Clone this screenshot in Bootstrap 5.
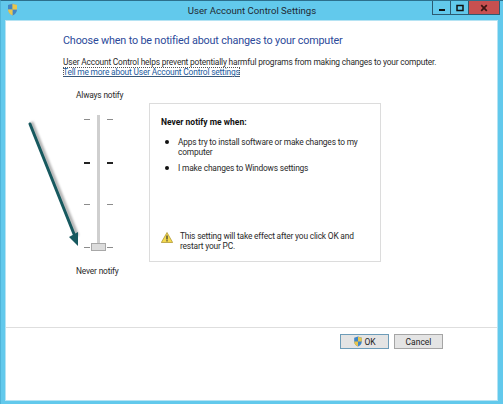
<!DOCTYPE html>
<html lang="en">
<head>
  <meta charset="UTF-8" />
  <meta name="viewport" content="width=device-width, initial-scale=1" />
  <title>User Account Control Settings</title>
  <link href="https://cdn.jsdelivr.net/npm/bootstrap@5.3.0/dist/css/bootstrap.min.css" rel="stylesheet" />
  <style>
    html, body { height: 404px; overflow: hidden; }
    body {
      background-color: #62c9ec;
      font-family: Roboto, "Noto Sans", "Liberation Sans", sans-serif;
      font-size: 8.4px;
      line-height: 10px;
      letter-spacing: -0.18px;
      color: #2a2a2a;
    }
    .win-frame { width: 503px; height: 404px; border-top: 1px solid #2c6f8c; border-left: 1px solid #4fb4d8; }
    .title-bar { height: 19px; }
    .title-text { font-size: 9.6px; letter-spacing: 0; color: #1f2a33; left: 0; right: 0; top: 4px; line-height: 12px; }
    .shield { margin: 2px 0 0 6px; }
    .win-btn { height: 14px; border: 1px solid #2c5a72; border-top: 0; background: #62c9ec; }
    .win-min { width: 19px; }
    .win-max { width: 18px; border-left: 0; }
    .win-close { width: 31px; border-left: 0; background: #c75050; margin-right: 3px; }
    .client {
      width: 493px; height: 381px; margin-left: 4px;
      background: #fff; border: 1px solid #b5e3f3;
    }
    .client-main { height: 306px; padding: 12px 0 0 57px; }
    .head-text { font-size: 10.8px; letter-spacing: -0.17px; line-height: 15px; color: #2c4a9a; margin-bottom: 9px; }
    .help-link { color: #1c5a9e; text-decoration: underline; outline: 1px dotted #555; outline-offset: -1px; width: max-content; display: block; }
    .slider-col { width: 73px; margin-left: 13px; }
    .slider-label { line-height: 10px; }
    .label-top { margin-top: 13px; }
    .slider-box { width: 47px; height: 142px; margin: 15px 0 9px 0; padding: 4px 0 0; position: relative; }
    .slider-track { position: absolute; left: 21px; top: 0; width: 3px; height: 130px; background: #cfcfcf; }
    .slider-thumb { position: absolute; left: 15px; top: 128px; width: 15px; height: 8px; background: #dcdcdc; border: 1px solid #a8a8a8; }
    .tick-row { height: 1.5px; margin-bottom: 41px; padding: 0 10px 0 8px; }
    .tick-mark { width: 6px; height: 1px; background: #8c8c8c; }
    .tick-mark.strong { background: #222; height: 2px; }
    .info-box {
      width: 232px; height: 159px; margin: 26px 0 0 0;
      border: 1px solid #dcdcdc; padding: 12.5px 12px 0 11px;
    }
    .info-title { font-weight: 700; font-size: 8.5px; letter-spacing: 0; color: #111; line-height: 11px; margin-bottom: 9.5px; }
    .info-list { padding-left: 17px; margin: 0; list-style: none; }
    .info-list li { position: relative; margin-bottom: 6px; }
    .info-list li::before { content: ""; position: absolute; left: -13px; top: 3px; width: 4px; height: 4px; border-radius: 50%; background: #111; }
    .warn-row { gap: 7px; margin-bottom: 10px; }
    .warn-icon { margin-top: 1px; }
    .arrow-over { position: absolute; left: 0; top: 0; pointer-events: none; }
    .foot-bar { border-top: 1px solid #dedede; height: 73px; padding: 6px 54px 0 0; gap: 5px; }
    .dlg-btn {
      width: 49px; height: 15px; padding: 0; font-size: 8.5px; letter-spacing: 0; line-height: 12px; color: #222;
      background: #e4e4e4; border: 1px solid #a5a5a5; border-radius: 0;
    }
    .dlg-btn.default-btn { border-color: #6d9cb8; gap: 1px; }
  </style>
</head>
<body class="m-0 position-relative">
  <div class="win-frame d-flex flex-column">
    <div class="title-bar d-flex justify-content-between align-items-start position-relative">
      <svg class="shield" width="11" height="13" viewBox="0 0 11 13">
        <path d="M5.5 0.5 L10 2 V6.5 C10 9.5 7.8 11.5 5.5 12.5 C3.2 11.5 1 9.5 1 6.5 V2 Z" fill="#8fa7a8"/>
        <path d="M5.5 1 V6.5 H1 V2 Z" fill="#3f86c6"/>
        <path d="M5.5 6.5 H10 C10 9 8 11.3 5.5 12.5 Z" fill="#3f86c6"/>
        <path d="M5.5 1 L10 2 V6.5 H5.5 Z" fill="#e8c64e"/>
        <path d="M5.5 6.5 V12.5 C3.2 11.5 1 9.5 1 6.5 Z" fill="#e8c64e"/>
      </svg>
      <div class="title-text position-absolute text-center">User Account Control Settings</div>
      <div class="d-flex">
        <div class="win-btn win-min d-flex align-items-center justify-content-center">
          <svg width="8" height="8" viewBox="0 0 8 8"><rect x="1" y="5" width="6" height="2" fill="#111"/></svg>
        </div>
        <div class="win-btn win-max d-flex align-items-center justify-content-center">
          <svg width="8" height="8" viewBox="0 0 8 8"><rect x="1" y="1.5" width="6" height="5" fill="none" stroke="#111" stroke-width="1.5"/></svg>
        </div>
        <div class="win-btn win-close d-flex align-items-center justify-content-center">
          <svg width="8" height="8" viewBox="0 0 8 8"><path d="M1.2 1.2 L6.8 6.8 M6.8 1.2 L1.2 6.8" stroke="#3a1512" stroke-width="1.7"/></svg>
        </div>
      </div>
    </div>

    <div class="client d-flex flex-column">
      <div class="client-main">
        <div class="head-text">Choose when to be notified about changes to your computer</div>
        <div>User Account Control helps prevent potentially harmful programs from making changes to your computer.</div>
        <a class="help-link" href="#">Tell me more about User Account Control settings</a>
        <div class="d-flex">
          <div class="slider-col">
            <div class="slider-label label-top">Always notify</div>
            <div class="slider-box">
              <div class="slider-track"></div>
              <div class="tick-row d-flex justify-content-between"><span class="tick-mark"></span><span class="tick-mark"></span></div>
              <div class="tick-row d-flex justify-content-between"><span class="tick-mark strong"></span><span class="tick-mark strong"></span></div>
              <div class="tick-row d-flex justify-content-between"><span class="tick-mark"></span><span class="tick-mark"></span></div>
              <div class="tick-row d-flex justify-content-between"><span class="tick-mark"></span><span class="tick-mark"></span></div>
              <div class="slider-thumb"></div>
            </div>
            <div class="slider-label">Never notify</div>
          </div>
          <div class="info-box d-flex flex-column justify-content-between">
            <div>
              <div class="info-title">Never notify me when:</div>
              <ul class="info-list">
                <li>Apps try to install software or make changes to my computer</li>
                <li>I make changes to Windows settings</li>
              </ul>
            </div>
            <div class="warn-row d-flex align-items-start">
              <svg class="warn-icon flex-shrink-0" width="12" height="11" viewBox="0 0 12 11">
                <path d="M6 0.5 L11.7 10.5 H0.3 Z" fill="#f3d94e" stroke="#a98f2a" stroke-width="0.7"/>
                <rect x="5.4" y="3.5" width="1.2" height="4" fill="#333"/>
                <rect x="5.4" y="8.2" width="1.2" height="1.2" fill="#333"/>
              </svg>
              <div>This setting will take effect after you click OK and restart your PC.</div>
            </div>
          </div>
        </div>
      </div>
      <div class="foot-bar d-flex justify-content-end align-items-start">
        <button class="dlg-btn default-btn d-flex align-items-center justify-content-center" type="button">
          <svg width="10" height="11" viewBox="0 0 11 13">
            <path d="M5.5 0.5 L10 2 V6.5 C10 9.5 7.8 11.5 5.5 12.5 C3.2 11.5 1 9.5 1 6.5 V2 Z" fill="#3f86c6"/>
            <path d="M5.5 1 L10 2 V6.5 H5.5 Z" fill="#e8c64e"/>
            <path d="M5.5 6.5 V12.5 C3.2 11.5 1 9.5 1 6.5 Z" fill="#e8c64e"/>
          </svg>
          OK
        </button>
        <button class="dlg-btn" type="button">Cancel</button>
      </div>
    </div>
  </div>

  <svg class="arrow-over" width="503" height="404" viewBox="0 0 503 404">
    <defs><filter id="arrow-blur" x="-30%" y="-10%" width="160%" height="120%"><feGaussianBlur stdDeviation="1.2"/></filter></defs>
    <line x1="30" y1="122" x2="76" y2="236" stroke="#000" stroke-opacity=".3" stroke-width="3.5" filter="url(#arrow-blur)" transform="translate(1.5 0)"/>
    <line x1="30" y1="124" x2="74" y2="234" stroke="#17595f" stroke-width="3" stroke-linecap="round"/>
    <path d="M78 246 L69 237 L78 232 Z" fill="#17595f"/>
  </svg>

  <script src="https://cdn.jsdelivr.net/npm/bootstrap@5.3.0/dist/js/bootstrap.bundle.min.js"></script>
</body>
</html>
